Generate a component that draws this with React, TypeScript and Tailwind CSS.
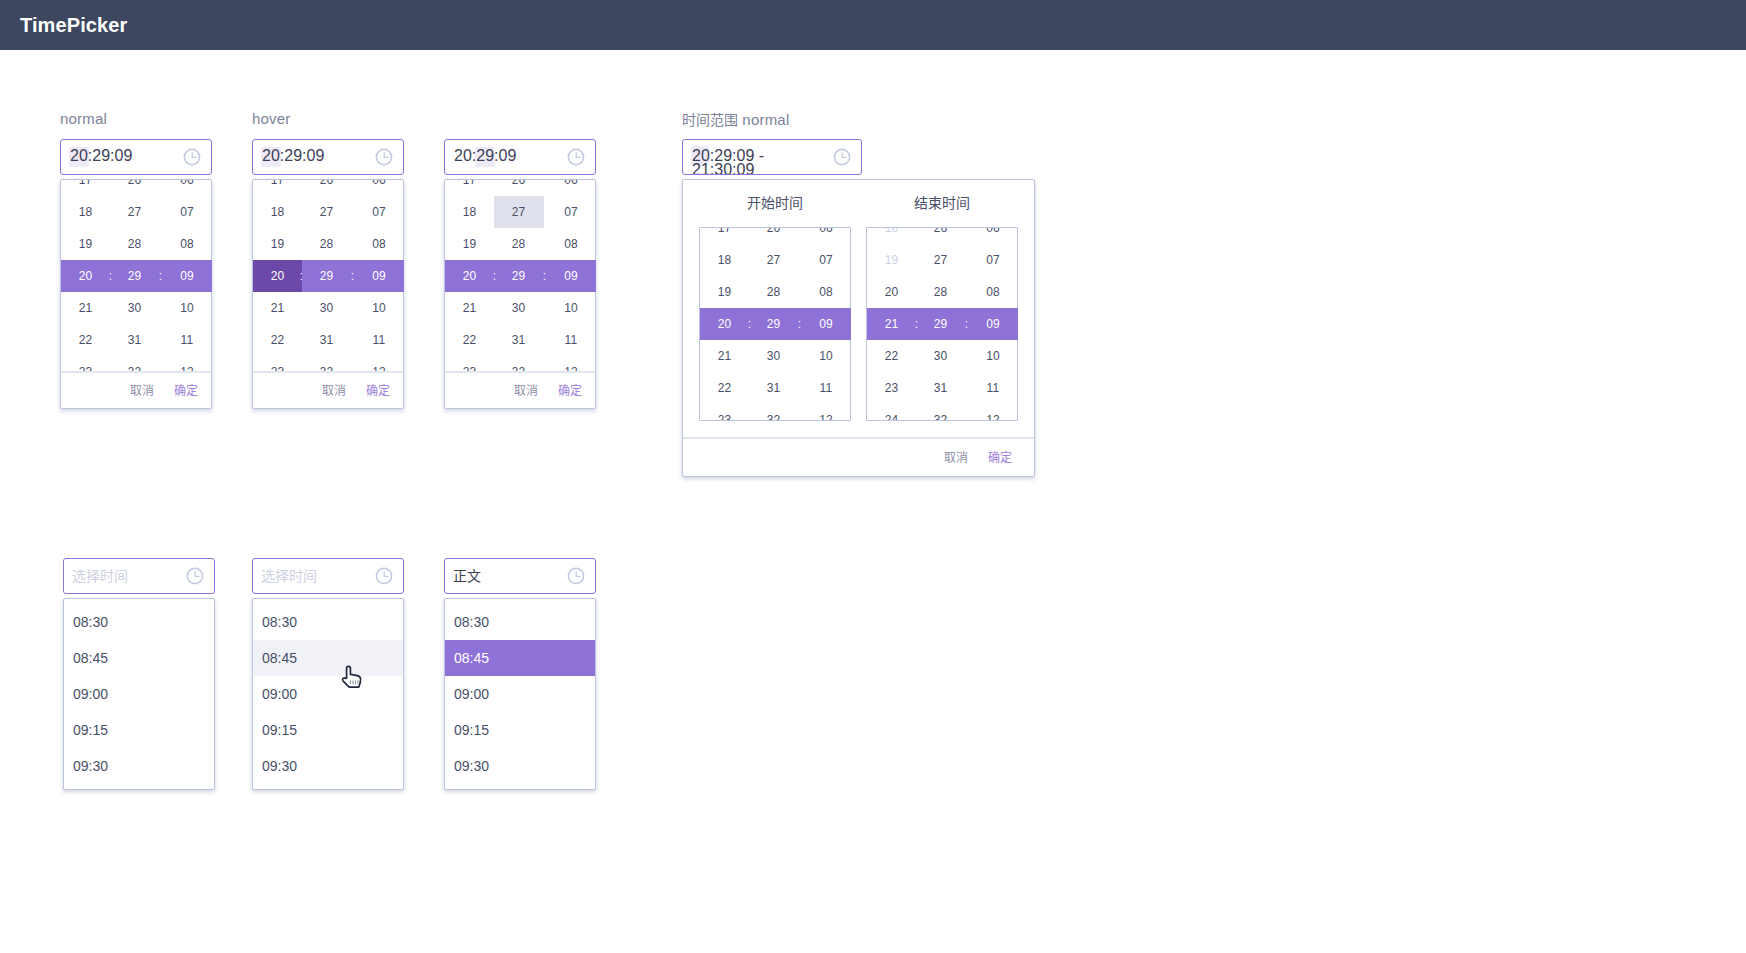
import React from "react";

const Clock = () => (
  <svg width="18" height="18" viewBox="0 0 18 18" fill="none" stroke="#c6cde0" strokeWidth="1.7" className="shrink-0">
    <circle cx="9" cy="9" r="7.6" />
    <path d="M9.2 4.6V9.4H13" strokeLinecap="round" strokeLinejoin="round" strokeWidth="1.3" />
  </svg>
);

const Hl = ({ children }: { children: React.ReactNode }) => (
  <span className="inline-block h-5 leading-[18px] rounded-[2px] bg-[#eeeaf8] -mx-px px-px">{children}</span>
);

function InputBox({ children, width = "w-[152px]", left = "pl-[9px]" }: { children: React.ReactNode; width?: string; left?: string }) {
  return (
    <div className={`${width} h-9 shrink-0 border border-[#8f72d8] rounded-[3px] bg-white flex items-center justify-between ${left} pr-[10px] overflow-hidden`}>
      {children}
      <Clock />
    </div>
  );
}

const T = "text-[16px] leading-5 text-[#3b4055] -mt-[2px]";

type Col = { items: string[]; faded?: number };

const COLS: Col[] = [
  { items: ["17", "18", "19", "20", "21", "22", "23"] },
  { items: ["26", "27", "28", "29", "30", "31", "32"] },
  { items: ["06", "07", "08", "09", "10", "11", "12"] },
];
const COLS2: Col[] = [
  { items: ["18", "19", "20", "21", "22", "23", "24"], faded: 2 },
  COLS[1],
  COLS[2],
];

function Wheel({ cols = COLS, hoverSel = false, hoverCell = false, height = "h-[191px]" }: { cols?: Col[]; hoverSel?: boolean; hoverCell?: boolean; height?: string }) {
  return (
    <div className={`${height} overflow-hidden flex w-[151px] -mr-px relative text-[12px] tracking-[0.2px]`}>
      {cols.map((col, c) => (
        <div key={c} className={`flex flex-col shrink-0 -mt-4 ${c === 0 ? "w-[49px]" : c === 1 ? "w-[50px]" : "w-[52px]"}`}>
          {col.items.map((it, i) => {
            const sel = i === 3;
            const dark = sel && hoverSel && c === 0;
            const hov = hoverCell && c === 1 && i === 1;
            const fade = col.faded !== undefined && i < col.faded;
            return (
              <div
                key={it}
                className={`relative h-8 shrink-0 flex items-center justify-center ${c === 1 ? "pr-[1px]" : ""} ${c === 2 ? "pl-[2px]" : ""} ${
                  dark ? "bg-[#6c48a8] text-white overflow-hidden" : sel ? "bg-[#8f72d8] text-[#fff]" : hov ? "bg-[#dfe2ec] text-[#484f69]" : fade ? "text-[#cdd1e2]" : "text-[#484f69]"
                }`}
              >
                {it}
                {sel && c < 2 && (
                  <span className={`absolute z-10 -right-[3px] w-[5px] text-center -top-[0.5px] leading-8 text-white ${dark ? "right-[-2px]" : ""}`}>:</span>
                )}
              </div>
            );
          })}
        </div>
      ))}
    </div>
  );
}

function Footer({ pr = "pr-[13px]", h = "h-[35px]", extra = "" }: { pr?: string; h?: string; extra?: string }) {
  return (
    <div className={`${h} border-t-2 border-[#e3e6ef] box-content flex items-center justify-end gap-[20px] ${pr} ${extra} text-[12px]`}>
      <span className="text-[#8c90a6]">取消</span>
      <span className="text-[#9b80e0]">确定</span>
    </div>
  );
}

const PANEL = "mt-1 bg-white border border-[#bcc3dc] rounded-[2px] shadow-[0_2px_4px_rgba(70,80,130,0.25)]";

function Picker({ label, sel = 0, hoverSel, hoverCell }: { label?: string; sel?: number; hoverSel?: boolean; hoverCell?: boolean }) {
  return (
    <div className="w-[152px] shrink-0">
      <div className="h-5 leading-5 mb-[10px] text-[15px] tracking-[0.2px] text-[#7c8299]">{label}</div>
      <InputBox>
        <div className={T}>
          {sel === 0 ? (
            <>
              <Hl>20</Hl>:29:09
            </>
          ) : (
            <>
              20:<Hl>29</Hl>:09
            </>
          )}
        </div>
      </InputBox>
      <div className={PANEL}>
        <Wheel hoverSel={hoverSel} hoverCell={hoverCell} />
        <Footer />
      </div>
    </div>
  );
}

function RangePicker() {
  return (
    <div className="ml-[46px] w-[353px] shrink-0">
      <div className="h-5 leading-5 mb-[10px] pt-px text-[15px] tracking-[0.2px] text-[#7c8299]">
        <span className="text-[14px] tracking-normal">时间范围</span> normal
      </div>
      <InputBox width="w-[180px]">
        <div className="w-[120px] h-[34px] pt-[9px] text-[16px] leading-[14px] text-[#3b4055] overflow-hidden">
          <span className="absolute h-5 w-[18px] -mt-[3px] -ml-px rounded-[2px] bg-[#eeeaf8]" />
          <span className="relative">20:29:09 - 21:30:09</span>
        </div>
      </InputBox>
      <div className={PANEL}>
        <div className="flex gap-[15px] pl-4">
          {[
            { t: "开始时间", cols: COLS },
            { t: "结束时间", cols: COLS2 },
          ].map((p) => (
            <div key={p.t} className="w-[152px]">
              <div className="h-[47px] flex items-center justify-center text-[14px] text-[#4a5068]">{p.t}</div>
              <div className="border border-[#bcc3dc] rounded-[1px]">
                <Wheel cols={p.cols} height="h-[192px]" />
              </div>
            </div>
          ))}
        </div>
        <div className="mt-4">
          <Footer pr="pr-[22px]" h="h-9" extra="pt-px" />
        </div>
      </div>
    </div>
  );
}

const Hand = () => (
  <svg width="24" height="26" viewBox="0 0 24 26" className="absolute left-[87px] top-[24px] z-20">
    <path
      d="M6.6 14.2V4.2a1.9 1.9 0 0 1 3.8 0v6.2l5.6.9c2.6.4 4.6 1.3 4.6 3.8 0 3-.5 5.4-1.8 8H9.2L3 16.8c-1.4-1.7 1-3.9 2.6-2.4z"
      fill="#fff"
      stroke="#232a3f"
      strokeWidth="1.7"
      strokeLinejoin="round"
    />
    <path d="M10.4 16.4v4M13 16.4v4M15.6 16.4v4M18 16.4v4" stroke="#5a6078" strokeWidth="0.7" fill="none" />
  </svg>
);

function ListPicker({ text, placeholder, hoverIdx, selIdx, ml }: { text: string; placeholder?: boolean; hoverIdx?: number; selIdx?: number; ml: string }) {
  const items = ["08:30", "08:45", "09:00", "09:15", "09:30"];
  return (
    <div className={`w-[152px] shrink-0 ${ml}`}>
      <InputBox left="pl-2">
        <span className={`text-[14px] ${placeholder ? "text-[#cdd1e2]" : "text-[#3a3f52]"}`}>{text}</span>
      </InputBox>
      <div className={`${PANEL} py-[5px]`}>
        {items.map((it, i) => (
          <div
            key={it}
            className={`relative h-9 flex items-center pl-[9px] text-[14px] ${
              i === selIdx ? "bg-[#8f72d8] text-white" : i === hoverIdx ? "bg-[#f1f2f7] text-[#484f69]" : "text-[#484f69]"
            }`}
          >
            {it}
            {i === hoverIdx && <Hand />}
          </div>
        ))}
      </div>
    </div>
  );
}

export default function App() {
  return (
    <div className="min-h-[953px] bg-white font-['Liberation_Sans','Noto_Sans_CJK_SC',sans-serif]">
      <header className="h-[50px] bg-[#3d475f] flex items-center pl-5 text-[20px] tracking-[0.1px] font-bold text-white">TimePicker</header>
      <main className="pl-[60px]">
        <div className="flex gap-10 pt-[59px]">
          <Picker label="normal" />
          <Picker label="hover" hoverSel />
          <Picker sel={1} hoverCell />
          <RangePicker />
        </div>
        <div className="flex mt-[81px]">
          <ListPicker ml="ml-[3px]" text="选择时间" placeholder />
          <ListPicker ml="ml-[37px]" text="选择时间" placeholder hoverIdx={1} />
          <ListPicker ml="ml-10" text="正文" selIdx={1} />
        </div>
      </main>
    </div>
  );
}
